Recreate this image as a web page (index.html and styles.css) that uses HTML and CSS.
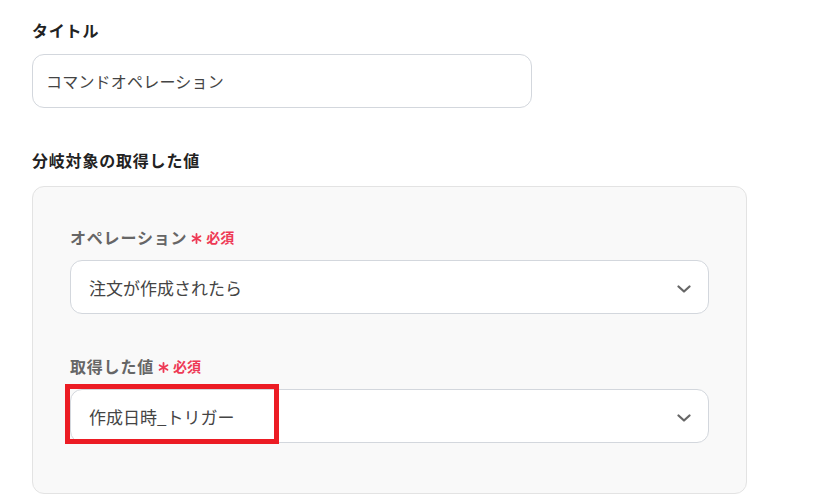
FILE: index.html
```html
<!DOCTYPE html>
<html lang="ja">
<head>
<meta charset="utf-8">
<link rel="stylesheet" href="styles.css">
</head>
<body>
<div class="page">
  <div class="field-label">タイトル</div>
  <div class="text-input">コマンドオペレーション</div>

  <div class="field-label second">分岐対象の取得した値</div>
  <div class="panel">
    <div class="sub-label">オペレーション<svg class="ast" viewBox="0 0 12 12"><g stroke="#ee3a55" stroke-width="2" stroke-linecap="round"><line x1="6" y1="1" x2="6" y2="11"/><line x1="1.7" y1="3.5" x2="10.3" y2="8.5"/><line x1="1.7" y1="8.5" x2="10.3" y2="3.5"/></g></svg><span class="req">必須</span></div>
    <div class="select">
      <span>注文が作成されたら</span>
      <svg class="chev" viewBox="0 0 14 8"><path d="M1.5 1.5 L7 6.5 L12.5 1.5" fill="none" stroke="#666" stroke-width="2.2" stroke-linecap="round" stroke-linejoin="round"/></svg>
    </div>

    <div class="sub-label second">取得した値<svg class="ast" viewBox="0 0 12 12"><g stroke="#ee3a55" stroke-width="2" stroke-linecap="round"><line x1="6" y1="1" x2="6" y2="11"/><line x1="1.7" y1="3.5" x2="10.3" y2="8.5"/><line x1="1.7" y1="8.5" x2="10.3" y2="3.5"/></g></svg><span class="req">必須</span></div>
    <div class="select highlighted">
      <span>作成日時_トリガー</span>
      <svg class="chev" viewBox="0 0 14 8"><path d="M1.5 1.5 L7 6.5 L12.5 1.5" fill="none" stroke="#666" stroke-width="2.2" stroke-linecap="round" stroke-linejoin="round"/></svg>
      <div class="mark"></div>
    </div>
  </div>
</div>
</body>
</html>
```
FILE: styles.css
```css
* { box-sizing: border-box; }
html, body { margin: 0; padding: 0; background: #fff; }
body {
  font-family: "Noto Sans CJK JP", "Noto Sans", sans-serif;
  color: #333;
}
.page {
  padding: 19px 0 0 32px;
  width: 835px;
  height: 501px;
  overflow: hidden;
}
.field-label {
  font-size: 16px;
  font-weight: 700;
  line-height: 22px;
  letter-spacing: 0.8px;
  color: #222;
}
.field-label.second { margin-top: 41px; }
.text-input {
  margin-top: 13px;
  width: 500px;
  height: 54px;
  border: 1px solid #d3d7dd;
  border-radius: 12px;
  background: #fff;
  display: flex;
  align-items: center;
  padding-left: 13px;
  font-size: 16px;
  letter-spacing: 0.2px;
  color: #444;
}
.panel {
  margin-top: 15px;
  width: 715px;
  height: 308px;
  background: #f9f9f9;
  border: 1px solid #e3e3e3;
  border-radius: 12px;
  padding: 39px 38px 0 37px;
}
.sub-label {
  display: flex;
  align-items: center;
  font-size: 16px;
  font-weight: 700;
  line-height: 22px;
  letter-spacing: 0.8px;
  color: #666;
}
.sub-label.second { margin-top: 41px; }
.ast { width: 11px; height: 11px; margin: 2px 4px 0 4px; }
.req {
  font-size: 14px;
  letter-spacing: 0;
  color: #ee3a55;
  font-weight: 700;
}
.select {
  position: relative;
  margin-top: 12px;
  width: 639px;
  height: 54px;
  border: 1px solid #d3d7dd;
  border-radius: 12px;
  background: #fff;
  display: flex;
  align-items: center;
  justify-content: space-between;
  padding: 0 17px 0 18px;
  font-size: 17px;
  color: #444;
}
.chev { width: 14px; height: 8px; margin-top: 3px; }
.mark {
  position: absolute;
  left: -6px;
  top: -6px;
  width: 214px;
  height: 60px;
  border: 5px solid #ec1c24;
}
```
